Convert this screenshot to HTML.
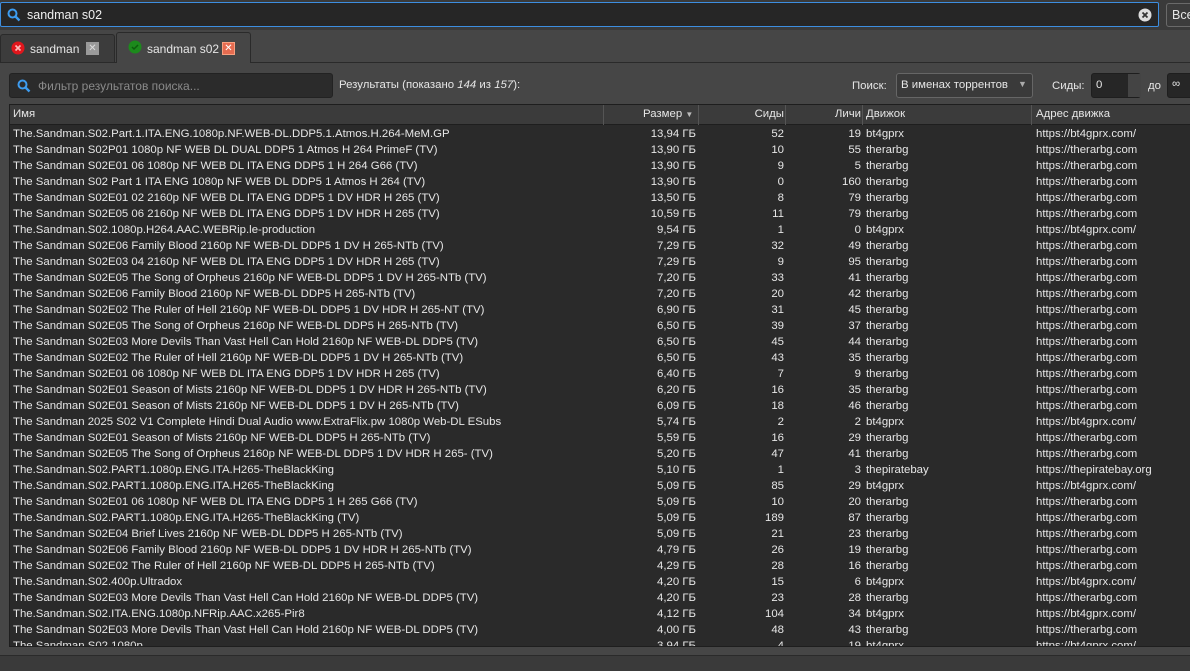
<!DOCTYPE html>
<html><head><meta charset="utf-8"><style>
*{margin:0;padding:0;box-sizing:border-box}
body{width:1190px;height:671px;overflow:hidden;background:#464646;font-family:"Liberation Sans","DejaVu Sans",sans-serif;font-size:11.4px;color:#e6e6e6;position:relative}
.abs{position:absolute}
#top{left:0;top:0;width:1190px;height:30px;background:#3a3a3a}
#search{left:0;top:2px;width:1159px;height:25px;background:#262626;border:1px solid #3d8ee0;border-radius:2px}
#search span{position:absolute;left:26px;top:5px;font-size:12.5px;color:#f0f0f0}
#all{left:1166px;top:3px;width:40px;height:24px;background:#3c3c3c;border:1px solid #6a6a6a;border-radius:3px;padding:4px 5px;font-size:12.5px}
.tab{height:30px;border:1px solid #2a2a2a;border-bottom:none;border-radius:3px 3px 0 0}
#filter{left:9px;top:73px;width:324px;height:25px;background:#2b2b2b;border:1px solid #222;border-radius:3px}
#filter span{position:absolute;left:28px;top:5px;color:#8a8a8a;font-size:12px}
#table{left:9px;top:104px;width:1190px;height:543px;background:#2a2a2a;border:1px solid #1e1e1e;overflow:hidden}
#hdr{position:absolute;left:0;top:0;width:1190px;height:20px;background:#3b3b3b;border-bottom:1px solid #1e1e1e}
.h{position:absolute;top:3px}
.hd{position:absolute;top:0;width:1px;height:20px;background:#555}
.r{position:absolute;left:0;width:1190px;height:16px;line-height:16px;white-space:nowrap}
.r span{position:absolute}
.c1{left:3px}.c2{right:504px;text-align:right}.c3{right:416px}.c4{right:339px}.c5{left:856px}.c6{left:1026px}
#status{left:0;top:655px;width:1190px;height:16px;background:#3a3a3a;border-top:1px solid #2a2a2a}
</style></head><body>
<div class="abs" id="top"></div>
<div class="abs" id="search">
<svg class="abs" style="left:6px;top:5px" width="14" height="14" viewBox="0 0 14 14"><circle cx="5.5" cy="5.5" r="4" fill="none" stroke="#3d9cf0" stroke-width="2"/><line x1="8.5" y1="8.5" x2="12.5" y2="12.5" stroke="#3d9cf0" stroke-width="2.4"/></svg>
<span>sandman s02</span>
<svg class="abs" style="left:1137px;top:5px" width="14" height="14"><circle cx="7" cy="7" r="6.5" fill="#ddd"/><path d="M4.5 4.5L9.5 9.5M9.5 4.5L4.5 9.5" stroke="#333" stroke-width="1.8"/></svg>
</div>
<div class="abs" id="all">Все</div>
<div class="abs tab" style="left:0;width:115px;background:#3c3c3c;height:29px;top:34px"></div>
<svg class="abs" style="left:11px;top:41px" width="14" height="14"><circle cx="7" cy="7" r="6.5" fill="#e0161c"/><path d="M4.5 4.5L9.5 9.5M9.5 4.5L4.5 9.5" stroke="#ffbcbc" stroke-width="1.6"/></svg>
<span class="abs" style="left:30px;top:42px;font-size:12px">sandman</span>
<div class="abs" style="left:86px;top:42px;width:13px;height:13px;background:#9a9a9a;color:#ddd;font-size:10px;text-align:center;line-height:13px">✕</div>
<div class="abs tab" style="left:116px;top:32px;width:135px;background:#464646;height:31px"></div>
<svg class="abs" style="left:128px;top:40px" width="14" height="14"><circle cx="7" cy="7" r="6.5" fill="#1c8a1c"/><path d="M4 7L6 9L10 5" stroke="#0c5c0c" stroke-width="1.5" fill="none"/></svg>
<span class="abs" style="left:147px;top:42px;font-size:12px">sandman s02</span>
<div class="abs" style="left:222px;top:42px;width:13px;height:13px;background:#e56b50;border:1px solid #f8a080;color:#fff;font-size:10px;text-align:center;line-height:11px">✕</div>
<div class="abs" style="left:0;top:62px;width:116px;height:1px;background:#2a2a2a"></div>
<div class="abs" style="left:251px;top:62px;width:939px;height:1px;background:#2a2a2a"></div>
<div class="abs" id="filter">
<svg class="abs" style="left:7px;top:5px" width="14" height="14" viewBox="0 0 14 14"><circle cx="5.5" cy="5.5" r="4" fill="none" stroke="#3d9cf0" stroke-width="2"/><line x1="8.5" y1="8.5" x2="12.5" y2="12.5" stroke="#3d9cf0" stroke-width="2.4"/></svg>
<span>Фильтр результатов поиска...</span></div>
<span class="abs" style="left:339px;top:79px">Результаты (показано <i>144</i> из <i>157</i>):</span>
<span class="abs" style="left:852px;top:80px">Поиск:</span>
<div class="abs" style="left:896px;top:73px;width:137px;height:25px;background:#3a3a3a;border:1px solid #666;border-radius:3px"><span class="abs" style="left:4px;top:5px">В именах торрентов</span><span class="abs" style="left:121px;top:5px;color:#aaa;font-size:9px">▼</span></div>
<span class="abs" style="left:1052px;top:80px">Сиды:</span>
<div class="abs" style="left:1091px;top:73px;width:50px;height:25px;background:#262626;border:1px solid #1e1e1e;border-radius:3px"><span class="abs" style="left:4px;top:5px">0</span><div class="abs" style="left:36px;top:0;width:13px;height:23px;background:#444"></div></div>
<span class="abs" style="left:1148px;top:80px">до</span>
<div class="abs" style="left:1167px;top:73px;width:40px;height:25px;background:#262626;border:1px solid #1e1e1e;border-radius:3px"><span class="abs" style="left:4px;top:4px">∞</span></div>
<div class="abs" id="table">
<div id="hdr">
<span class="h" style="left:3px">Имя</span>
<div class="hd" style="left:593px"></div>
<span class="h" style="left:633px">Размер <span style="font-size:8px;color:#bbb">▼</span></span>
<div class="hd" style="left:688px"></div>
<span class="h" style="right:416px">Сиды</span>
<div class="hd" style="left:775px"></div>
<span class="h" style="right:339px">Личи</span>
<div class="hd" style="left:852px"></div>
<span class="h" style="left:856px">Движок</span>
<div class="hd" style="left:1021px"></div>
<span class="h" style="left:1026px">Адрес движка</span>
</div>
<div id="rows"></div>
</div>
<div class="abs" id="status"></div>
<script>
var d=[
["The.Sandman.S02.Part.1.ITA.ENG.1080p.NF.WEB-DL.DDP5.1.Atmos.H.264-MeM.GP","13,94 ГБ",52,19,"bt4gprx"],
["The Sandman S02P01 1080p NF WEB DL DUAL DDP5 1 Atmos H 264 PrimeF (TV)","13,90 ГБ",10,55,"therarbg"],
["The Sandman S02E01 06 1080p NF WEB DL ITA ENG DDP5 1 H 264 G66 (TV)","13,90 ГБ",9,5,"therarbg"],
["The Sandman S02 Part 1 ITA ENG 1080p NF WEB DL DDP5 1 Atmos H 264 (TV)","13,90 ГБ",0,160,"therarbg"],
["The Sandman S02E01 02 2160p NF WEB DL ITA ENG DDP5 1 DV HDR H 265 (TV)","13,50 ГБ",8,79,"therarbg"],
["The Sandman S02E05 06 2160p NF WEB DL ITA ENG DDP5 1 DV HDR H 265 (TV)","10,59 ГБ",11,79,"therarbg"],
["The.Sandman.S02.1080p.H264.AAC.WEBRip.le-production","9,54 ГБ",1,0,"bt4gprx"],
["The Sandman S02E06 Family Blood 2160p NF WEB-DL DDP5 1 DV H 265-NTb (TV)","7,29 ГБ",32,49,"therarbg"],
["The Sandman S02E03 04 2160p NF WEB DL ITA ENG DDP5 1 DV HDR H 265 (TV)","7,29 ГБ",9,95,"therarbg"],
["The Sandman S02E05 The Song of Orpheus 2160p NF WEB-DL DDP5 1 DV H 265-NTb (TV)","7,20 ГБ",33,41,"therarbg"],
["The Sandman S02E06 Family Blood 2160p NF WEB-DL DDP5 H 265-NTb (TV)","7,20 ГБ",20,42,"therarbg"],
["The Sandman S02E02 The Ruler of Hell 2160p NF WEB-DL DDP5 1 DV HDR H 265-NT (TV)","6,90 ГБ",31,45,"therarbg"],
["The Sandman S02E05 The Song of Orpheus 2160p NF WEB-DL DDP5 H 265-NTb (TV)","6,50 ГБ",39,37,"therarbg"],
["The Sandman S02E03 More Devils Than Vast Hell Can Hold 2160p NF WEB-DL DDP5 (TV)","6,50 ГБ",45,44,"therarbg"],
["The Sandman S02E02 The Ruler of Hell 2160p NF WEB-DL DDP5 1 DV H 265-NTb (TV)","6,50 ГБ",43,35,"therarbg"],
["The Sandman S02E01 06 1080p NF WEB DL ITA ENG DDP5 1 DV HDR H 265 (TV)","6,40 ГБ",7,9,"therarbg"],
["The Sandman S02E01 Season of Mists 2160p NF WEB-DL DDP5 1 DV HDR H 265-NTb (TV)","6,20 ГБ",16,35,"therarbg"],
["The Sandman S02E01 Season of Mists 2160p NF WEB-DL DDP5 1 DV H 265-NTb (TV)","6,09 ГБ",18,46,"therarbg"],
["The Sandman 2025 S02 V1 Complete Hindi Dual Audio www.ExtraFlix.pw 1080p Web-DL ESubs","5,74 ГБ",2,2,"bt4gprx"],
["The Sandman S02E01 Season of Mists 2160p NF WEB-DL DDP5 H 265-NTb (TV)","5,59 ГБ",16,29,"therarbg"],
["The Sandman S02E05 The Song of Orpheus 2160p NF WEB-DL DDP5 1 DV HDR H 265- (TV)","5,20 ГБ",47,41,"therarbg"],
["The.Sandman.S02.PART1.1080p.ENG.ITA.H265-TheBlackKing","5,10 ГБ",1,3,"thepiratebay"],
["The.Sandman.S02.PART1.1080p.ENG.ITA.H265-TheBlackKing","5,09 ГБ",85,29,"bt4gprx"],
["The Sandman S02E01 06 1080p NF WEB DL ITA ENG DDP5 1 H 265 G66 (TV)","5,09 ГБ",10,20,"therarbg"],
["The.Sandman.S02.PART1.1080p.ENG.ITA.H265-TheBlackKing (TV)","5,09 ГБ",189,87,"therarbg"],
["The Sandman S02E04 Brief Lives 2160p NF WEB-DL DDP5 H 265-NTb (TV)","5,09 ГБ",21,23,"therarbg"],
["The Sandman S02E06 Family Blood 2160p NF WEB-DL DDP5 1 DV HDR H 265-NTb (TV)","4,79 ГБ",26,19,"therarbg"],
["The Sandman S02E02 The Ruler of Hell 2160p NF WEB-DL DDP5 H 265-NTb (TV)","4,29 ГБ",28,16,"therarbg"],
["The.Sandman.S02.400p.Ultradox","4,20 ГБ",15,6,"bt4gprx"],
["The Sandman S02E03 More Devils Than Vast Hell Can Hold 2160p NF WEB-DL DDP5 (TV)","4,20 ГБ",23,28,"therarbg"],
["The.Sandman.S02.ITA.ENG.1080p.NFRip.AAC.x265-Pir8","4,12 ГБ",104,34,"bt4gprx"],
["The Sandman S02E03 More Devils Than Vast Hell Can Hold 2160p NF WEB-DL DDP5 (TV)","4,00 ГБ",48,43,"therarbg"],
["The.Sandman.S02.1080p","3,94 ГБ",4,19,"bt4gprx"]];
var u={bt4gprx:"https://bt4gprx.com/",therarbg:"https://therarbg.com",thepiratebay:"https://thepiratebay.org"};
var h="";d.forEach(function(r,i){h+='<div class="r" style="top:'+(21+i*16)+'px"><span class="c1">'+r[0]+'</span><span class="c2">'+r[1]+'</span><span class="c3">'+r[2]+'</span><span class="c4">'+r[3]+'</span><span class="c5">'+r[4]+'</span><span class="c6">'+u[r[4]]+'</span></div>'});
document.getElementById("rows").innerHTML=h;
</script>
</body></html>
